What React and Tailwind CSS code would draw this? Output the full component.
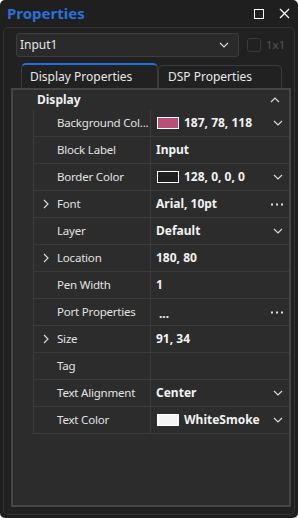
import React from "react";

const Chevron = ({ dir = "down", className = "" }) => {
  const d =
    dir === "down"
      ? "M1 1 L5 5 L9 1"
      : dir === "up"
      ? "M1 5 L5 1 L9 5"
      : "M1 1 L5 5 L1 9";
  const w = dir === "right" ? 7 : 10;
  const h = dir === "right" ? 10 : 6;
  return (
    <svg width={w} height={h} viewBox={`0 0 ${w} ${h}`} className={className}>
      <path d={d} fill="none" stroke="#d8d8d8" strokeWidth="1.2" />
    </svg>
  );
};

const Dots = () => (
  <svg width="12" height="3" viewBox="0 0 12 3">
    <rect x="0" y="0.5" width="2" height="2" fill="#e0e0e0" />
    <rect x="5" y="0.5" width="2" height="2" fill="#e0e0e0" />
    <rect x="10" y="0.5" width="2" height="2" fill="#e0e0e0" />
  </svg>
);

const rows = [
  { label: "Background Col...", swatch: "#bb4e76", value: "187, 78, 118", right: "down" },
  { label: "Block Label", value: "Input" },
  { label: "Border Color", swatch: "#1e1e1e", value: "128, 0, 0, 0", right: "down" },
  { label: "Font", expand: true, value: "Arial, 10pt", right: "dots" },
  { label: "Layer", value: "Default", right: "down" },
  { label: "Location", expand: true, value: "180, 80" },
  { label: "Pen Width", value: "1" },
  { label: "Port Properties", value: "...", dotsVal: true, right: "dots" },
  { label: "Size", expand: true, value: "91, 34" },
  { label: "Tag", value: "" },
  { label: "Text Alignment", value: "Center", right: "down" },
  { label: "Text Color", swatch: "#f5f5f5", value: "WhiteSmoke", right: "down" },
];

export default function App() {
  return (
    <div
      className="w-[298px] h-[518px] bg-[#1f1f1f] rounded-[5px] overflow-hidden flex flex-col"
      style={{ fontFamily: '"Noto Sans", "Open Sans", sans-serif' }}
    >
      {/* title bar */}
      <div className="h-[27px] flex items-center pl-[7px] pr-[8px] shrink-0">
        <div className="text-[15px] font-bold text-[#2a6fdb] leading-none">Properties</div>
        <div className="flex-1" />
        <div className="w-[10px] h-[10px] border-[1.5px] border-white mr-[15px]" />
        <svg width="11" height="11" viewBox="0 0 11 11">
          <path d="M1 1 L10 10 M10 1 L1 10" stroke="#ffffff" strokeWidth="1.3" />
        </svg>
      </div>

      {/* inner panel */}
      <div className="mx-[3px] mb-[3px] flex-1 rounded-[5px] border border-[#333333] bg-[#212121] flex flex-col">
        {/* dropdown row */}
        <div className="flex items-center pl-[12px] pt-[5px] h-[29px] shrink-0">
          <div className="w-[223px] h-[24px] rounded-[3px] border border-[#3d3d3d] bg-[#2a2a2a] flex items-center pl-[3px] pr-[9px]">
            <span className="text-[12px] text-[#e6e6e6]">Input1</span>
            <div className="flex-1" />
            <Chevron dir="down" />
          </div>
          <div className="ml-[8px] w-[14px] h-[14px] rounded-[3px] border border-[#3a3a3a]" />
          <span className="ml-[5px] text-[11.5px] text-[#555555]">1x1</span>
        </div>

        {/* tabs */}
        <div className="flex items-end pl-[17px] h-[31px] shrink-0">
          <div className="w-[137px] h-[25px] rounded-t-[5px] border-t-2 border-t-[#1f6fe0] border-x border-x-[#3c3c3c] bg-[#212121] flex items-center pl-[8px]">
            <span className="text-[12px] text-[#e8e8e8]">Display Properties</span>
          </div>
          <div className="w-[124px] h-[23px] rounded-t-[5px] border border-b-0 border-[#3a3a3a] flex items-center pl-[9px]">
            <span className="text-[12px] text-[#e8e8e8]">DSP Properties</span>
          </div>
        </div>

        {/* grid */}
        <div className="ml-[7px] mr-[3px] mb-[7px] flex-1 border-2 border-[#454545] bg-[#2c2c2c] flex flex-col">
          <div className="h-[20px] flex items-center pl-[24px] pr-[9px] shrink-0">
            <span className="text-[12px] font-bold text-[#f0f0f0]">Display</span>
            <div className="flex-1" />
            <Chevron dir="up" />
          </div>
          {rows.map((r) => (
            <div key={r.label} className="flex h-[27px] shrink-0">
              <div className="w-[20px] shrink-0" />
              <div className="flex-1 flex border-l border-b border-[#3b3b3b]">
                <div className="w-[117px] shrink-0 flex items-center border-r border-[#3b3b3b] overflow-hidden">
                  <div className="w-[23px] shrink-0 flex justify-center pl-[1px]">
                    {r.expand && <Chevron dir="right" />}
                  </div>
                  <span className="text-[11.5px] tracking-[-0.2px] text-[#e2e2e2] whitespace-nowrap">{r.label}</span>
                </div>
                <div className="flex-1 flex items-center pl-[5px] pr-[6px]">
                  {r.swatch && (
                    <div
                      className="w-[22px] h-[12px] border border-white mr-[5px] ml-[1px] shrink-0"
                      style={{ background: r.swatch }}
                    />
                  )}
                  {r.dotsVal ? (
                    <span className="text-[12px] font-bold text-[#f2f2f2] pl-[3px] pt-[4px]">...</span>
                  ) : (
                    <span className="text-[12px] font-bold text-[#f2f2f2] whitespace-nowrap">{r.value}</span>
                  )}
                  <div className="flex-1" />
                  {r.right === "down" && <Chevron dir="down" />}
                  {r.right === "dots" && <Dots />}
                </div>
              </div>
            </div>
          ))}
        </div>
      </div>
    </div>
  );
}
